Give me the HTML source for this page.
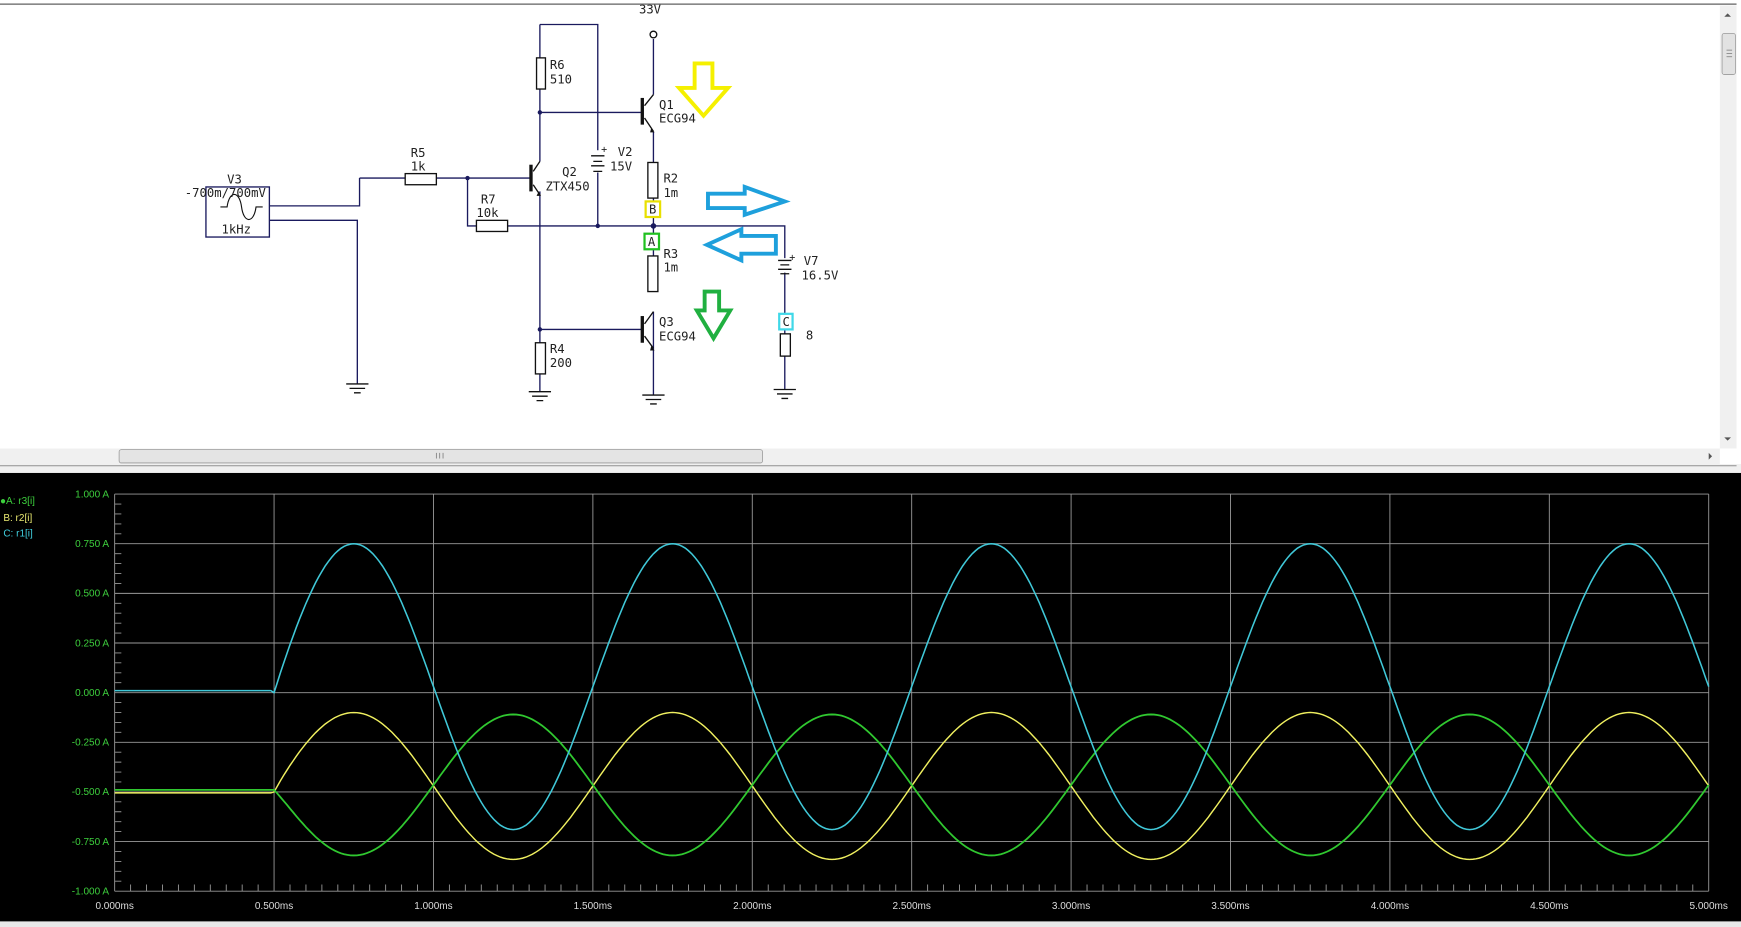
<!DOCTYPE html>
<html><head><meta charset="utf-8"><style>
html,body{margin:0;padding:0;width:1741px;height:927px;overflow:hidden;background:#fff}
svg{display:block}
.s{font-family:"DejaVu Sans Mono","Liberation Mono",monospace;font-size:11px;fill:#222}
.p{font-family:"Liberation Sans",sans-serif;font-size:9px}
</style></head><body>
<svg id="g" width="1741" height="927" viewBox="0 0 1564 833" preserveAspectRatio="none" xmlns="http://www.w3.org/2000/svg">
<rect x="0" y="0" width="1564" height="833" fill="#fff"/>
<rect x="0" y="3" width="1560" height="1.5" fill="#888"/>
<rect x="1545" y="5" width="15" height="398" fill="#f0f0f0"/>
<rect x="1547" y="30" width="12" height="37" fill="#e2e2e2" stroke="#999" stroke-width="0.7" rx="2"/>
<path d="M1551 45h5M1551 48h5M1551 51h5" stroke="#777" stroke-width="0.7"/>
<path d="M1549 15l3-3 3 3z M1549 393l3 3 3-3z" fill="#555"/>
<rect x="0" y="403" width="1545" height="14" fill="#f0f0f0"/>
<rect x="107" y="404" width="578" height="12" fill="#e4e4e4" stroke="#999" stroke-width="0.7" rx="2"/>
<path d="M392 407v5M395 407v5M398 407v5" stroke="#777" stroke-width="0.7"/>
<path d="M1535 407l3 3-3 3z" fill="#555"/>
<rect x="0" y="417" width="1564" height="8" fill="#f0f0f0"/>
<rect x="0" y="418" width="1560" height="1" fill="#999"/>
<rect x="0" y="425" width="1564" height="403" fill="#000"/>
<rect x="0" y="828" width="1564" height="5" fill="#e8e8e8"/>

<g stroke="#1a1a5e" stroke-width="1.2" fill="none">
<path d="M587 35V85 M577 101H485 M587 118V146 M587 178V262 M587 280V355 M577 296H485"/>
<path d="M485 22H537V135 M537 155V203 M485 22V52 M485 80V145 M485 172V308 M485 336V352"/>
<path d="M323 160H364 M392 160H477 M420 160V203H428 M456 203H705V232 M705 245V300 M705 320V350"/>
<path d="M242 185H323V160 M242 198H321V345"/>
</g>
<g stroke="#111" stroke-width="1.2" fill="#fff">
<circle cx="587" cy="31" r="3" fill="#fff"/>
<rect x="482" y="52" width="8" height="28"/>
<rect x="582" y="146" width="9" height="32"/>
<rect x="582" y="230" width="9" height="32"/>
<rect x="364" y="156" width="28" height="10"/>
<rect x="428" y="198" width="28" height="10"/>
<rect x="481" y="308" width="9" height="28"/>
<rect x="701" y="300" width="9" height="20"/>
<rect x="185" y="168" width="57" height="45" stroke="#1a1a5e"/>
</g>
<path d="M198 186h6c2-15 11-15 13 0s11 15 13 0h6" stroke="#111" fill="none" stroke-width="1"/>
<g stroke="#111" stroke-width="1.2" fill="none">
<path d="M577 88V112" stroke-width="3"/><path d="M579 95L587 85 M579 106L587 118"/>
<path d="M577 284V308" stroke-width="3"/><path d="M579 291L587 280 M579 302L587 313"/>
<path d="M477 148V172" stroke-width="3"/><path d="M479 154L485 145 M479 166L485 175"/>
<path d="M531 140h12 M533 145h8 M531 149h12 M533 154h8"/>
<path d="M699 234h12 M701 238h8 M699 242h12 M701 246h8"/>
<path d="M311 345h20 M314 349h14 M318 353h6 M475 352h20 M478 356h14 M482 360h6 M577 355h20 M580 359h14 M584 363h6 M695 350h20 M698 354h14 M702 358h6"/>
</g>
<g fill="#1a1a5e"><circle cx="485" cy="101" r="2"/><circle cx="420" cy="160" r="2"/><circle cx="537" cy="203" r="2"/><circle cx="587" cy="203" r="2.5"/><circle cx="485" cy="296" r="2"/></g>
<path d="M585 115l3 4-4 0z M585 311l3 4-4 0z M484 172l2 4-4 0z" fill="#111"/>
<rect x="580" y="181" width="13" height="14" fill="#fff" stroke="#e8e000" stroke-width="2"/>
<rect x="579" y="210" width="13" height="14" fill="#fff" stroke="#20c020" stroke-width="2"/>
<rect x="700" y="282" width="12" height="14" fill="#fff" stroke="#40d8e8" stroke-width="2"/>
<g class="s">
<text x="574" y="12">33V</text>
<text x="494" y="62">R6</text><text x="494" y="75">510</text>
<text x="592" y="98">Q1</text><text x="592" y="110">ECG94</text>
<text x="555" y="140">V2</text><text x="548" y="153">15V</text><text x="540" y="137" font-size="9">+</text>
<text x="369" y="141">R5</text><text x="369" y="153">1k</text>
<text x="505" y="158">Q2</text><text x="490" y="171">ZTX450</text>
<text x="204" y="165">V3</text><text x="166" y="177">-700m/700mV</text><text x="199" y="210">1kHz</text>
<text x="432" y="183">R7</text><text x="428" y="195">10k</text>
<text x="596" y="164">R2</text><text x="596" y="177">1m</text>
<text x="583" y="192">B</text><text x="582" y="221">A</text><text x="703" y="293">C</text>
<text x="596" y="232">R3</text><text x="596" y="244">1m</text>
<text x="722" y="238">V7</text><text x="720" y="251">16.5V</text><text x="709" y="234" font-size="9">+</text>
<text x="592" y="293">Q3</text><text x="592" y="306">ECG94</text>
<text x="494" y="317">R4</text><text x="494" y="330">200</text>
<text x="724" y="305">8</text>
</g>
<path d="M624 57h16v22h14l-22 25-22-25h14z" fill="none" stroke="#f5f000" stroke-width="3.5"/>
<path d="M636 174h33v-6l36 13-36 12v-6h-33z" fill="none" stroke="#1ea0dc" stroke-width="3.5"/>
<path d="M697 212h-31v-6l-31 14 31 14v-6h31z" fill="none" stroke="#1ea0dc" stroke-width="3.5"/>
<path d="M633 262h13v17h10l-15 25-15-25h7z" fill="none" stroke="#20b040" stroke-width="3.5"/>

<g id="grid" stroke="#9a9a9a" stroke-width="0.8"></g>
<g id="labels" class="p"></g>
<text class="p" x="0" y="453" fill="#3dd03d">●A: r3[i]</text>
<text class="p" x="3" y="468" fill="#e8e870">B: r2[i]</text>
<text class="p" x="3" y="482" fill="#40d0e0">C: r1[i]</text>
<polyline id="cB" fill="none" stroke="#f0f060" stroke-width="1.3"/>
<polyline id="cA" fill="none" stroke="#30c830" stroke-width="1.6"/>
<polyline id="cC" fill="none" stroke="#40c8d8" stroke-width="1.4"/>
</svg>
<script>
var X0=103,DX=143.2,Y0=444,DY=44.6;
var ns="http://www.w3.org/2000/svg",g=document.getElementById('grid'),L=document.getElementById('labels');
function el(t,a,p){var e=document.createElementNS(ns,t);for(var k in a)e.setAttribute(k,a[k]);p.appendChild(e);return e;}
var d="";
for(var i=0;i<=10;i++){var x=X0+i*DX;d+="M"+x+" "+Y0+"V"+(Y0+8*DY);}
for(var j=0;j<=8;j++){var y=Y0+j*DY;d+="M"+X0+" "+y+"H"+(X0+10*DX);}
for(var k=0;k<=100;k++){var x=X0+k*DX/10;d+="M"+x+" "+(Y0+8*DY)+"v-6";}
for(var k=0;k<=40;k++){var y=Y0+k*DY/5;d+="M"+X0+" "+y+"h6";}
el('path',{d:d},g);
var yl=["1.000 A","0.750 A","0.500 A","0.250 A","0.000 A","-0.250 A","-0.500 A","-0.750 A","-1.000 A"];
for(var j=0;j<9;j++){var t=el('text',{x:98,y:Y0+j*DY+3,fill:"#3dd03d","text-anchor":"end"},L);t.textContent=yl[j];}
for(var i=0;i<=10;i++){var t=el('text',{x:X0+i*DX,y:817,fill:"#ddd","text-anchor":"middle"},L);t.textContent=(i*0.5).toFixed(3)+"ms";}
function pts(f){var s=[];for(var t=0;t<=5.0001;t+=0.01){s.push((X0+t/0.5*DX).toFixed(1)+","+(Y0+(1-f(t))*4*DY).toFixed(1));}return s.join(" ");}
function S(t){return t<0.5?0:Math.sin(2*Math.PI*(t-0.5));}
document.getElementById('cC').setAttribute('points',pts(function(t){return t<0.5?0.01:0.72*S(t)+0.03*(1-Math.exp(-(t-0.5)*20));}));
document.getElementById('cB').setAttribute('points',pts(function(t){return t<0.5?-0.505:-0.47+0.37*S(t)-0.03*Math.exp(-(t-0.5)*20);}));
document.getElementById('cA').setAttribute('points',pts(function(t){return t<0.5?-0.49:-0.465-0.355*S(t)-0.025*Math.exp(-(t-0.5)*20);}));
</script>
</body></html>
